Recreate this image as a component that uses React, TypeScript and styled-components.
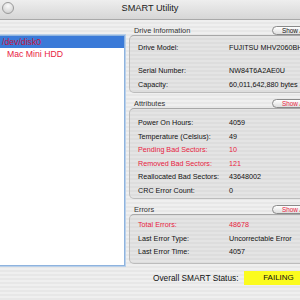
import styled, { createGlobalStyle } from "styled-components";

const Global = createGlobalStyle`
  body {
    margin: 0;
    font-family: "Liberation Sans", Arial, sans-serif;
  }
`;

const pinstripe = `repeating-linear-gradient(to bottom, #efefef 0px, #efefef 2px, #e7e7e7 2px, #e7e7e7 4px)`;

const Window = styled.div`
  width: 300px;
  height: 300px;
  overflow: hidden;
  display: flex;
  flex-direction: column;
  background: ${pinstripe};
`;

const TitleBar = styled.div`
  height: 19px;
  flex: 0 0 19px;
  border-bottom: 1px solid #a9a9a9;
  background: linear-gradient(to bottom, #eeeeee, #d6d6d6);
  display: flex;
  align-items: center;
  justify-content: center;
  position: relative;
`;

const CloseDot = styled.div`
  position: absolute;
  left: 2px;
  top: 2px;
  width: 10px;
  height: 10px;
  border-radius: 50%;
  border: 1px solid #9a9a9a;
  background: radial-gradient(circle at 50% 30%, #fafafa, #c9c9c9);
`;

const Title = styled.span`
  font-size: 9.2px;
  color: #1a1a1a;
  margin-top: -3px;
`;

const Body = styled.div`
  display: flex;
  flex: 1;
`;

const ListBox = styled.div`
  flex: 0 0 126px;
  margin-left: -3px;
  margin-top: 15px;
  height: 229px;
  background: #fff;
  border: 1px solid #8eb3de;
  box-shadow: 0 0 0 1px #b9d0ea;
`;

const ListRow = styled.div<{ $selected?: boolean; $indent?: number }>`
  height: 12px;
  line-height: 12px;
  font-size: 8.7px;
  padding-left: ${(p) => p.$indent ?? 0}px;
  color: ${(p) => (p.$selected ? "#c4143c" : "#e8223f")};
  background: ${(p) => (p.$selected ? "#3a7ad8" : "transparent")};
`;

const Side = styled.div`
  flex: 0 0 200px;
  margin-left: 4px;
  padding-top: 5px;
  display: flex;
  flex-direction: column;
`;

const GroupHead = styled.div`
  height: 10px;
  display: flex;
  align-items: center;
  padding-left: 5px;
`;

const GroupLabel = styled.span`
  flex: 1;
  font-size: 7.4px;
  color: #333;
`;

const ShowButton = styled.div<{ $alert?: boolean }>`
  flex: 0 0 44px;
  height: 9px;
  margin-right: 13px;
  box-sizing: border-box;
  border: 1px solid #8a8a8a;
  border-radius: 5px;
  background: linear-gradient(to bottom, #ffffff, #dedede);
  font-size: 6.4px;
  line-height: 7px;
  padding-left: 9px;
  color: ${(p) => (p.$alert ? "#e8223f" : "#111")};
  white-space: nowrap;
`;

const GroupBox = styled.div<{ $top: number; $bottom: number }>`
  border: 1px solid #bcbcbc;
  border-top-color: #a7a7a7;
  border-radius: 5px;
  background: rgba(0, 0, 0, 0.045);
  padding: ${(p) => p.$top}px 0 ${(p) => p.$bottom}px 8px;
  margin-bottom: 5px;
`;

const Row = styled.div<{ $alert?: boolean; $gap?: number }>`
  height: 13.5px;
  display: flex;
  align-items: center;
  font-size: 7.2px;
  color: ${(p) => (p.$alert ? "#e8223f" : "#111")};
  margin-bottom: ${(p) => p.$gap ?? 0}px;
  white-space: nowrap;
`;

const RowLabel = styled.span`
  flex: 0 0 91px;
`;

const StatusRow = styled.div`
  display: flex;
  align-items: center;
  height: 14px;
  margin-top: 2px;
  padding-left: 24px;
`;

const StatusLabel = styled.span`
  font-size: 8.3px;
  color: #111;
  flex: 0 0 91px;
`;

const StatusValue = styled.span`
  flex: 0 0 69px;
  height: 14px;
  line-height: 14px;
  background: #fbfb1e;
  text-align: center;
  font-size: 8px;
  color: #111;
`;

type Item = { label: string; value: string; alert?: boolean; gap?: number };

const drive: Item[] = [
  { label: "Drive Model:", value: "FUJITSU MHV2060BHPL", gap: 9.5 },
  { label: "Serial Number:", value: "NW84T6A2AE0U" },
  { label: "Capacity:", value: "60,011,642,880 bytes" },
];

const attributes: Item[] = [
  { label: "Power On Hours:", value: "4059" },
  { label: "Temperature (Celsius):", value: "49" },
  { label: "Pending Bad Sectors:", value: "10", alert: true },
  { label: "Removed Bad Sectors:", value: "121", alert: true },
  { label: "Reallocated Bad Sectors:", value: "43648002" },
  { label: "CRC Error Count:", value: "0" },
];

const errors: Item[] = [
  { label: "Total Errors:", value: "48678", alert: true },
  { label: "Last Error Type:", value: "Uncorrectable Error" },
  { label: "Last Error Time:", value: "4057" },
];

const Rows = ({ items }: { items: Item[] }) => (
  <>
    {items.map((it) => (
      <Row key={it.label} $alert={it.alert} $gap={it.gap}>
        <RowLabel>{it.label}</RowLabel>
        <span>{it.value}</span>
      </Row>
    ))}
  </>
);

export default function App() {
  return (
    <Window>
      <Global />
      <TitleBar>
        <CloseDot />
        <Title>SMART Utility</Title>
      </TitleBar>
      <Body>
        <ListBox>
          <ListRow $selected $indent={4}>/dev/disk0</ListRow>
          <ListRow $indent={9}>Mac Mini HDD</ListRow>
        </ListBox>
        <Side>
          <GroupHead>
            <GroupLabel>Drive Information</GroupLabel>
            <ShowButton>Show All</ShowButton>
          </GroupHead>
          <GroupBox $top={5} $bottom={1}>
            <Rows items={drive} />
          </GroupBox>

          <GroupHead>
            <GroupLabel>Attributes</GroupLabel>
            <ShowButton $alert>Show All</ShowButton>
          </GroupHead>
          <GroupBox $top={7} $bottom={1}>
            <Rows items={attributes} />
          </GroupBox>

          <GroupHead>
            <GroupLabel>Errors</GroupLabel>
            <ShowButton $alert>Show All</ShowButton>
          </GroupHead>
          <GroupBox $top={3} $bottom={4}>
            <Rows items={errors} />
          </GroupBox>

          <StatusRow>
            <StatusLabel>Overall SMART Status:</StatusLabel>
            <StatusValue>FAILING</StatusValue>
          </StatusRow>
        </Side>
      </Body>
    </Window>
  );
}
